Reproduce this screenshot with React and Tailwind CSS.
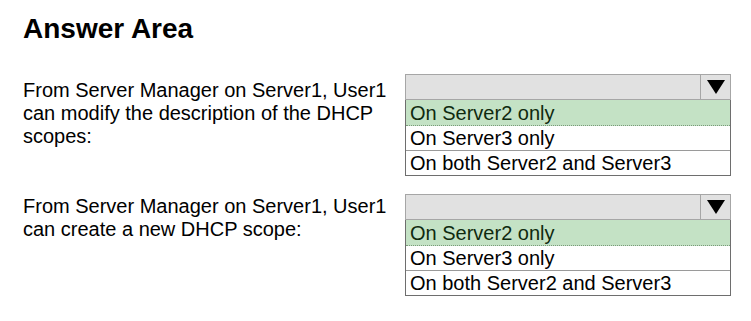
const options = ['On Server2 only', 'On Server3 only', 'On both Server2 and Server3'];

const Dropdown = () => (
  <div className="w-[326px]">
    <div className="flex h-[26px] border border-[#a6a6a6] bg-[#e1e1e1]">
      <div className="flex-1" />
      <div className="flex w-[30px] items-center justify-center border-l border-[#a6a6a6]">
        <svg width="18" height="14" viewBox="0 0 18 14">
          <polygon points="0,0 18,0 9,14" fill="#000" />
        </svg>
      </div>
    </div>
    <div className="border-x border-b border-[#6e6e6e]">
      <div className="h-[26px] border-b border-dotted border-[#7a9a7a] bg-[#c4e2c5] pl-[4px] leading-[26px] text-[#0f2a0f]">
        {options[0]}
      </div>
      <div className="h-[25px] border-b border-[#9a9a9a] pl-[4px] leading-[25px]">{options[1]}</div>
      <div className="h-[24px] pl-[4px] leading-[24px]">{options[2]}</div>
    </div>
  </div>
);

const Question = ({ lines, textClass }) => (
  <div className="flex">
    <div className={`${textClass} w-[382px] leading-[23px]`}>
      {lines.map((l) => (
        <div key={l}>{l}</div>
      ))}
    </div>
    <Dropdown />
  </div>
);

export default function App() {
  return (
    <div
      className="h-[321px] w-[751px] bg-white pl-[23px] pt-[13px] text-[20px] text-black"
      style={{ fontFamily: '"Liberation Sans", Arial, sans-serif' }}
    >
      <h1 className="text-[28px] font-bold leading-[32px]">Answer Area</h1>
      <div className="mt-[29px] flex flex-col gap-[18px]">
        <Question
          textClass="mt-[5px]"
          lines={[
            'From Server Manager on Server1, User1',
            'can modify the description of the DHCP',
            'scopes:',
          ]}
        />
        <Question
          textClass="mt-[1px]"
          lines={['From Server Manager on Server1, User1', 'can create a new DHCP scope:']}
        />
      </div>
    </div>
  );
}
